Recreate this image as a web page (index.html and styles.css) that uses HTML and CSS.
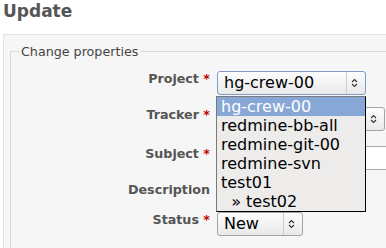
FILE: index.html
```html
<!DOCTYPE html>
<html>
<head>
<meta charset="utf-8">
<link rel="stylesheet" href="styles.css">
</head>
<body>
<h2 class="page-title">Update</h2>
<div class="box">
  <fieldset class="props">
    <legend class="props-legend">Change properties</legend>
    <div class="form">
      <div class="row">
        <label class="label">Project <span class="req">*</span></label>
        <div class="field">
          <div class="select select-focus select-project">
            <span class="select-text">hg-crew-00</span>
            <span class="select-arrow"><svg width="7" height="10" viewBox="0 0 7 10"><path d="M1 4 L3.5 1.5 L6 4 M1 6 L3.5 8.5 L6 6" fill="none" stroke="#333" stroke-width="1.1"/></svg></span>
          </div>
          <ul class="popup">
            <li class="popup-item popup-item-active">hg-crew-00</li>
            <li class="popup-item">redmine-bb-all</li>
            <li class="popup-item">redmine-git-00</li>
            <li class="popup-item">redmine-svn</li>
            <li class="popup-item">test01</li>
            <li class="popup-item">&nbsp;&nbsp;» test02</li>
          </ul>
        </div>
      </div>
      <div class="row row-tracker">
        <label class="label">Tracker <span class="req">*</span></label>
        <div class="field">
          <div class="select select-tracker">
            <span class="select-text"></span>
            <span class="select-arrow"><svg width="7" height="10" viewBox="0 0 7 10"><path d="M1 4 L3.5 1.5 L6 4 M1 6 L3.5 8.5 L6 6" fill="none" stroke="#333" stroke-width="1.1"/></svg></span>
          </div>
        </div>
      </div>
      <div class="row">
        <label class="label">Subject <span class="req">*</span></label>
        <div class="field">
          <div class="input"></div>
        </div>
      </div>
      <div class="row row-desc">
        <label class="label">Description</label>
        <div class="field"></div>
      </div>
      <div class="row">
        <label class="label">Status <span class="req">*</span></label>
        <div class="field">
          <div class="select select-small">
            <span class="select-text">New</span>
            <span class="select-arrow"><svg width="7" height="10" viewBox="0 0 7 10"><path d="M1 4 L3.5 1.5 L6 4 M1 6 L3.5 8.5 L6 6" fill="none" stroke="#333" stroke-width="1.1"/></svg></span>
          </div>
        </div>
      </div>
      <div class="row">
        <span class="label"></span>
        <div class="field">
          <div class="select select-small">
            <span class="select-text"></span>
            <span class="select-arrow"></span>
          </div>
        </div>
      </div>
    </div>
  </fieldset>
</div>
</body>
</html>
```
FILE: styles.css
```css
html, body {
  margin: 0;
  overflow: hidden;
}
body {
  width: 386px;
  height: 248px;
  font-family: "DejaVu Sans", sans-serif;
  background: #fff;
  color: #333;
}
.page-title {
  margin: 0;
  padding: 1px 0 0 3px;
  height: 20px;
  font-size: 17px;
  line-height: 20px;
  font-weight: bold;
  color: #555;
}
.box {
  margin: 13px -80px 0 3px;
  padding: 9px 6px 20px;
  background: #f6f6f6;
  border: 1px solid #e2e2e2;
}
.props {
  margin: 0;
  min-width: 0;
  padding: 12px 0 10px 8px;
  border: 1px solid #dadada;
}
.props-legend {
  padding: 0 2px;
  font-size: 12.7px;
  color: #444;
}
.form {
  display: flex;
  flex-direction: column;
  gap: 12px;
}
.row {
  display: flex;
  gap: 7px;
  min-height: 24px;
}
.row-tracker {
  min-height: 27px;
}
.row-desc {
  min-height: 18px;
}
.label {
  flex: none;
  width: 191px;
  text-align: right;
  font-size: 12.7px;
  font-weight: bold;
  color: #555;
}
.req {
  color: #bb0000;
}
.field {
  position: relative;
  flex: 1;
}
.select {
  display: flex;
  align-items: center;
  box-sizing: border-box;
  height: 24px;
  border: 1px solid #a4a4a4;
  border-radius: 3px;
  background: linear-gradient(#fdfdfd, #e9e9e9);
  font-size: 16px;
  color: #000;
}
.select-focus {
  border-color: #7f9cc6;
}
.select-project {
  width: 149px;
}
.select-tracker {
  width: 168px;
}
.select-small {
  width: 86px;
}
.select-text {
  flex: 1;
  padding-left: 6px;
  line-height: 20px;
  white-space: nowrap;
  overflow: hidden;
}
.select-arrow {
  flex: none;
  align-self: stretch;
  width: 15px;
  padding-right: 3px;
  border-left: 1px solid #cdcdcd;
  display: flex;
  align-items: center;
  justify-content: center;
}
.input {
  box-sizing: border-box;
  width: 300px;
  height: 24px;
  border: 1px solid #a9a9a9;
  background: #fff;
}
.popup {
  position: absolute;
  left: -1px;
  top: 25px;
  z-index: 5;
  box-sizing: border-box;
  width: 150px;
  margin: 0;
  padding: 0;
  list-style: none;
  background: #edeceb;
  border: 1px solid #000;
  border-left-color: #7a7a7a;
  border-top-color: #7a7a7a;
  font-size: 16px;
  color: #000;
}
.popup-item {
  padding: 0 4px;
  line-height: 19px;
  white-space: nowrap;
}
.popup-item-active {
  background: #87a8d7;
  color: #fff;
}
```
